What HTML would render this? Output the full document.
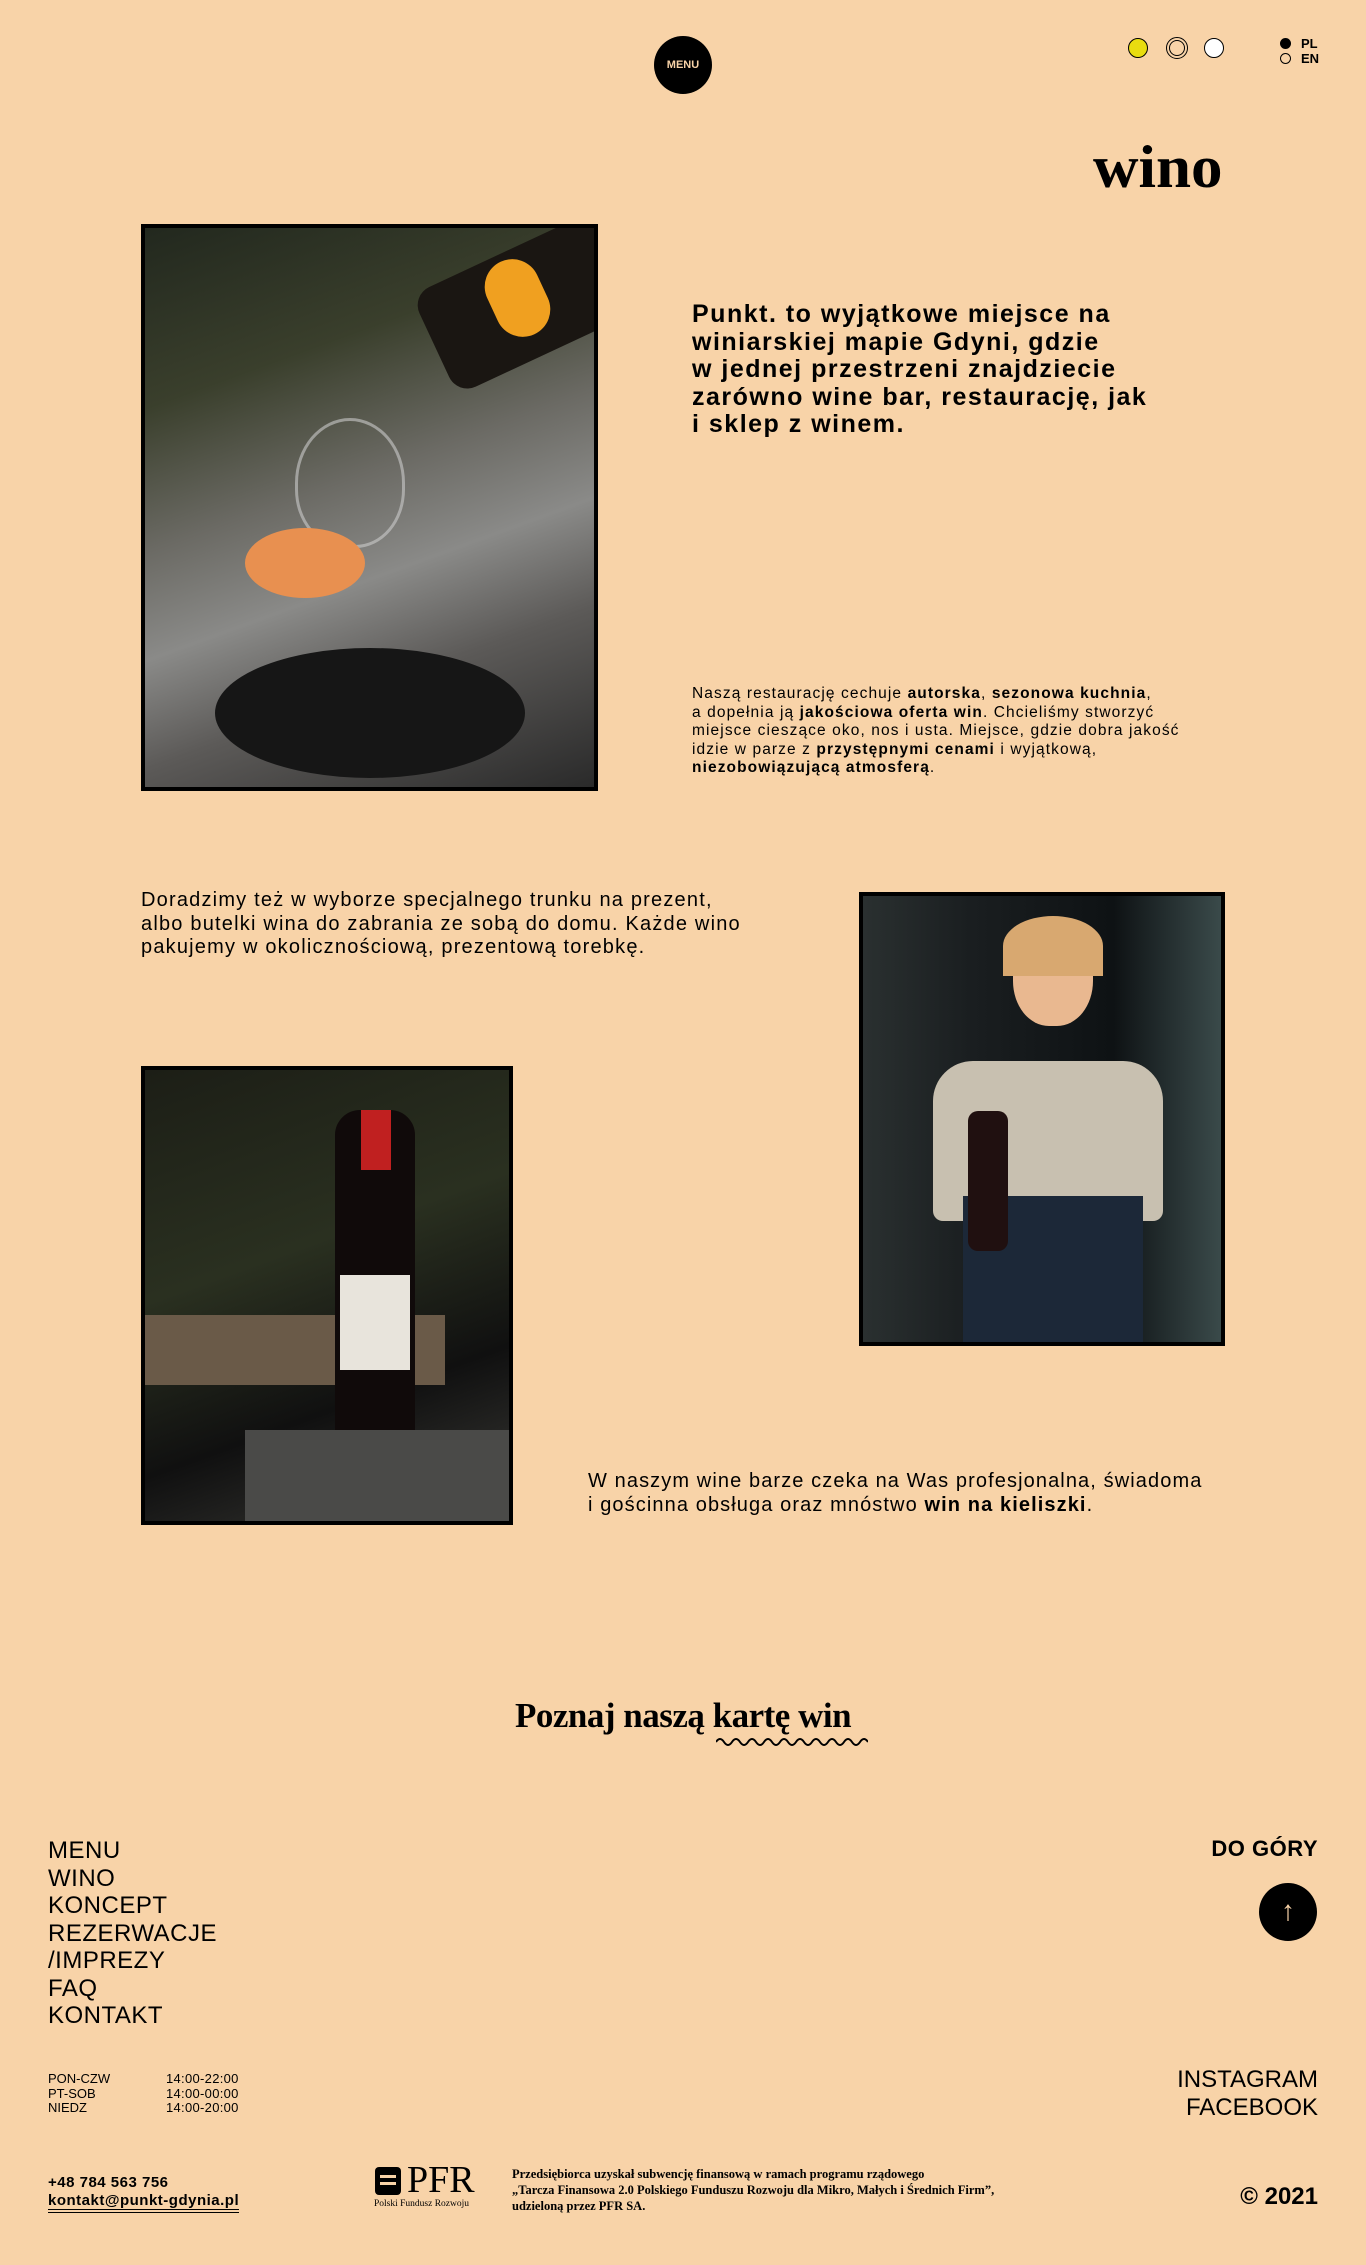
<!DOCTYPE html>
<html><head><meta charset="utf-8"><style>
*{margin:0;padding:0;box-sizing:border-box}
body{width:1366px;height:2265px;background:#f8d3a8;font-family:"Liberation Sans",sans-serif;color:#000;position:relative;overflow:hidden}
.a{position:absolute;white-space:nowrap}
.img{position:absolute;border:4px solid #000;overflow:hidden}
.serif{font-family:"Liberation Serif",serif;font-weight:bold}
b{font-weight:bold}
</style></head><body>
<div class="a" style="left:654px;top:36px;width:58px;height:58px;border-radius:50%;background:#000;color:#f8d3a8;font-size:11px;font-weight:bold;text-align:center;line-height:58px">MENU</div>
<div class="a" style="left:1128px;top:38px;width:20px;height:20px;border-radius:50%;background:#e8dc10;border:1.5px solid #000"></div>
<div class="a" style="left:1166px;top:37px;width:22px;height:22px;border-radius:50%;border:1.5px solid #000;padding:2px"><div style="width:100%;height:100%;border-radius:50%;border:1.5px solid #000"></div></div>
<div class="a" style="left:1204px;top:38px;width:20px;height:20px;border-radius:50%;background:#fff;border:1.5px solid #000"></div>
<div class="a" style="left:1280px;top:38px;width:11px;height:11px;border-radius:50%;background:#000"></div>
<div class="a" style="left:1280px;top:53px;width:11px;height:11px;border-radius:50%;border:1.5px solid #000"></div>
<div class="a" style="left:1301px;top:36px;font-size:13px;font-weight:bold;line-height:15px">PL<br>EN</div>
<div class="a serif" style="left:1093px;top:132px;font-size:60px;line-height:70px;transform:scaleX(1.05);transform-origin:left">wino</div>

<div class="img" style="left:141px;top:224px;width:457px;height:567px;background:linear-gradient(160deg,#22281e 0%,#3a3f2c 25%,#6b6a64 45%,#8a8a88 60%,#5c5a58 75%,#2a2a2a 100%)">
<div class="a" style="left:150px;top:190px;width:110px;height:130px;border-radius:50% 50% 45% 45%;border:3px solid #ccc;opacity:.6"></div>
<div class="a" style="left:280px;top:20px;width:200px;height:110px;background:#1a1612;transform:rotate(-25deg);border-radius:20px"></div>
<div class="a" style="left:345px;top:30px;width:55px;height:80px;background:#f0a020;border-radius:30px;transform:rotate(-25deg)"></div>
<div class="a" style="left:70px;top:420px;width:310px;height:130px;background:#161616;border-radius:50%"></div>
<div class="a" style="left:100px;top:300px;width:120px;height:70px;background:#e89050;border-radius:50%"></div>
</div>
<div class="a" style="left:692px;top:301px;font-size:25px;font-weight:bold;line-height:27.5px;letter-spacing:1.5px">Punkt. to wyjątkowe miejsce na<br>winiarskiej mapie Gdyni, gdzie<br>w&nbsp;jednej przestrzeni znajdziecie<br>zarówno wine bar, restaurację, jak<br>i&nbsp;sklep z&nbsp;winem.</div>
<div class="a" style="left:692px;top:685px;font-size:15.5px;line-height:18.5px;letter-spacing:1.1px">Naszą restaurację cechuje <b>autorska</b>, <b>sezonowa kuchnia</b>,<br>a dopełnia ją <b>jakościowa oferta win</b>. Chcieliśmy stworzyć<br>miejsce cieszące oko, nos i usta. Miejsce, gdzie dobra jakość<br>idzie w parze z <b>przystępnymi cenami</b> i wyjątkową,<br><b>niezobowiązującą atmosferą</b>.</div>

<div class="a" style="left:141px;top:889px;font-size:20px;line-height:23.5px;letter-spacing:1.2px">Doradzimy też w wyborze specjalnego trunku na prezent,<br>albo butelki wina do zabrania ze sobą do domu. Każde wino<br>pakujemy w okolicznościową, prezentową torebkę.</div>

<div class="img" style="left:859px;top:892px;width:366px;height:454px;background:linear-gradient(90deg,#2a3030 0%,#1a1e20 30%,#0e1214 70%,#3a4a4a 100%)">
<div class="a" style="left:150px;top:30px;width:80px;height:100px;background:#e9b890;border-radius:45%"></div>
<div class="a" style="left:140px;top:20px;width:100px;height:60px;background:#d8a870;border-radius:50% 50% 0 0"></div>
<div class="a" style="left:70px;top:165px;width:230px;height:160px;background:#c8c0b0;border-radius:40px 40px 10px 10px"></div>
<div class="a" style="left:100px;top:300px;width:180px;height:160px;background:#1c2838"></div>
<div class="a" style="left:105px;top:215px;width:40px;height:140px;background:#201010;border-radius:10px"></div>
</div>

<div class="img" style="left:141px;top:1066px;width:372px;height:459px;background:linear-gradient(160deg,#1c1e16 0%,#2a3020 40%,#101010 70%,#3a3a36 100%)">
<div class="a" style="left:0;top:245px;width:300px;height:70px;background:#6a5a48"></div>
<div class="a" style="left:190px;top:40px;width:80px;height:370px;background:#100a0a;border-radius:25px 25px 4px 4px"></div>
<div class="a" style="left:195px;top:205px;width:70px;height:95px;background:#e8e4dc"></div>
<div class="a" style="left:216px;top:40px;width:30px;height:60px;background:#c02020"></div>
<div class="a" style="left:100px;top:360px;width:270px;height:100px;background:#4a4a48"></div>
</div>
<div class="a" style="left:588px;top:1470px;font-size:20px;line-height:23.5px;letter-spacing:1.1px">W naszym wine barze czeka na Was profesjonalna, świadoma<br>i gościnna obsługa oraz mnóstwo <b>win na kieliszki</b>.</div>

<div class="a serif" style="left:0;width:1366px;top:1695px;text-align:center;font-size:35px;line-height:42px;letter-spacing:-0.5px">Poznaj naszą kartę win</div>
<svg class="a" style="left:716px;top:1734px" width="152" height="12" viewBox="0 0 152 12"><path d="M0 8 Q4 2 8 8 T16 8 T24 8 T32 8 T40 8 T48 8 T56 8 T64 8 T72 8 T80 8 T88 8 T96 8 T104 8 T112 8 T120 8 T128 8 T136 8 T144 8 T152 8" fill="none" stroke="#000" stroke-width="2"/></svg>

<div class="a" style="left:48px;top:1837px;font-size:24px;line-height:27.5px;letter-spacing:0.5px">MENU<br>WINO<br>KONCEPT<br>REZERWACJE<br>/IMPREZY<br>FAQ<br>KONTAKT</div>
<div class="a" style="right:48px;top:1836px;font-size:22px;font-weight:bold;letter-spacing:0.5px">DO GÓRY</div>
<div class="a" style="left:1259px;top:1883px;width:58px;height:58px;border-radius:50%;background:#000;color:#f8d3a8;font-size:28px;text-align:center;line-height:56px">↑</div>
<div class="a" style="left:48px;top:2072px;font-size:13px;line-height:14.5px">PON-CZW<br>PT-SOB<br>NIEDZ</div>
<div class="a" style="left:166px;top:2072px;font-size:13px;line-height:14.5px;letter-spacing:0.3px">14:00-22:00<br>14:00-00:00<br>14:00-20:00</div>
<div class="a" style="right:48px;top:2066px;font-size:24px;line-height:27.5px;text-align:right">INSTAGRAM<br>FACEBOOK</div>
<div class="a" style="left:48px;top:2174px;font-size:15px;font-weight:bold;line-height:18px;letter-spacing:0.5px">+48 784 563 756<br><span style="border-bottom:4px double #000">kontakt@punkt-gdynia.pl</span></div>
<div class="a" style="left:375px;top:2167px;width:26px;height:28px;background:#000;border-radius:4px"><div style="margin:8px 5px;height:3px;background:#f8d3a8;box-shadow:0 7px 0 #f8d3a8"></div></div>
<div class="a" style="left:407px;top:2160px;font-family:'Liberation Serif',serif;font-size:38px;line-height:40px">PFR</div>
<div class="a" style="left:374px;top:2199px;font-family:'Liberation Serif',serif;font-size:9.5px">Polski Fundusz Rozwoju</div>
<div class="a" style="left:512px;top:2166px;font-family:'Liberation Serif',serif;font-weight:bold;font-size:12.5px;line-height:16px">Przedsiębiorca uzyskał subwencję finansową w ramach programu rządowego<br>„Tarcza Finansowa 2.0 Polskiego Funduszu Rozwoju dla Mikro, Małych i Średnich Firm”,<br>udzieloną przez PFR SA.</div>
<div class="a" style="right:48px;top:2183px;font-size:24px;font-weight:bold">© 2021</div>
</body></html>
